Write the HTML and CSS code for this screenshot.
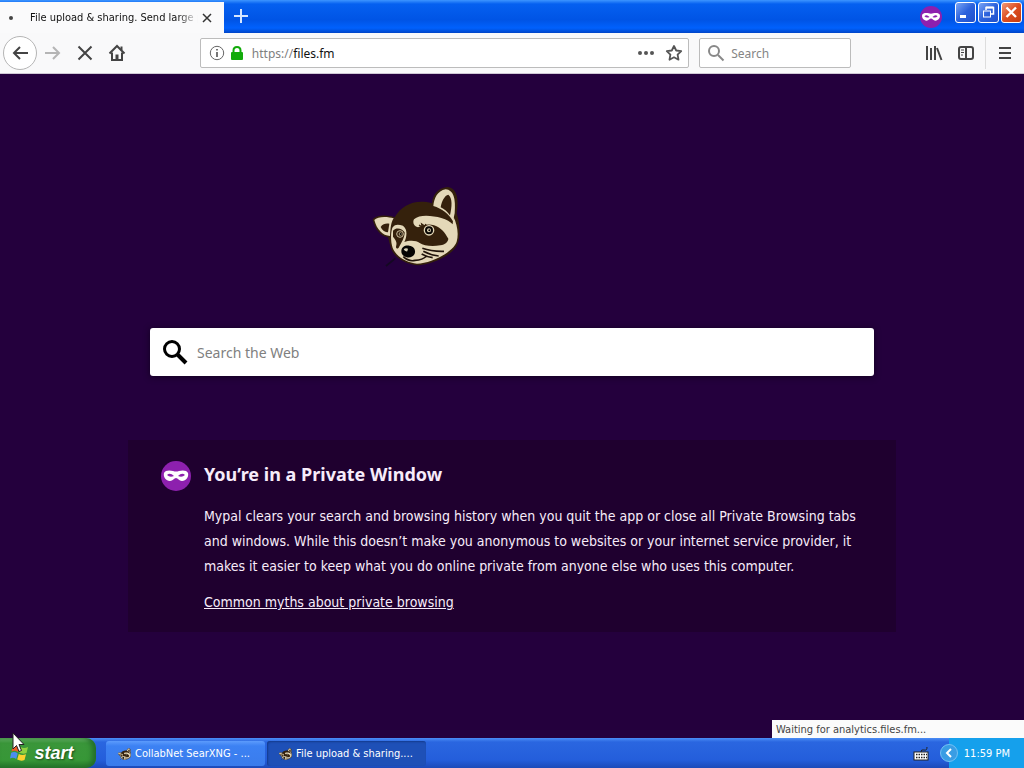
FILE: index.html
```html
<!DOCTYPE html>
<html lang="en">
<head>
  <meta charset="UTF-8" />
  <meta name="viewport" content="width=device-width, initial-scale=1.0"/>
  <title>Private Browsing</title>
  <link rel="stylesheet" href="styles.css">
</head>
<body>

  <!-- shared artwork -->
  <svg class="defs" aria-hidden="true">
    <symbol id="mask" viewBox="0 0 30 30">
      <circle cx="15" cy="15" r="15" fill="#8d20ae"/>
      <path d="M3 12C4 9 9 9 12 10Q15 11 18 10C21 9 26 9 27 12C28 16 25 20 21 20C18 20 17 17 15 17C13 17 12 20 9 20C5 20 2 16 3 12Z" fill="#fff"/>
      <path d="M6 14Q9 11 13 15Q9 17 6 14ZM17 15Q21 11 24 14Q21 17 17 15Z" fill="#8d20ae"/>
    </symbol>
    <symbol id="raccoon" viewBox="0 0 360 300">
      <path d="M38 130C48 115 86 116 104 124C125 88 165 68 216 82C218 58 232 36 262 33C292 36 297 70 290 112C298 135 303 175 294 200C284 234 220 266 172 268C130 262 102 244 92 214L84 184C60 180 44 158 38 130Z" fill="#35210c"/>
      <path d="M43 132C52 120 84 121 101 127C93 140 92 152 90 180C68 179 50 160 43 132Z" fill="#e4d8b8"/>
      <path d="M62 153C68 142 80 142 88 143L84 169C76 169 66 163 62 153Z" fill="#35210c"/>
      <path d="M220 90C222 68 232 44 257 40C280 42 288 66 284 112L279 136C266 112 246 98 220 90Z" fill="#e4d8b8"/>
      <path d="M242 94C245 75 254 58 265 56C278 66 276 92 270 118C262 107 253 100 242 94Z" fill="#35210c"/>
      <path d="M280 122C291 142 297 173 290 197C282 224 219 262 171 263C139 260 109 242 98 216C91 196 92 166 98 154C105 144 115 145 129 149C146 162 138 188 133 198C148 193 169 193 179 201C191 209 214 212 241 208C256 205 264 198 265 188C254 170 244 155 222 148C203 142 187 149 174 154C161 151 157 139 162 130C179 114 217 119 244 126C260 131 271 137 278 145Z" fill="#e4d8b8"/>
      <path d="M99 164C110 153 126 158 134 169C134 184 126 198 116 215C110 221 106 216 109 207C112 199 104 187 99 183Z" fill="#35210c"/>
      <circle cx="120" cy="174" r="10" fill="none" stroke="#c9bd9e" stroke-width="3"/>
      <circle cx="121" cy="174" r="5" fill="#a5997b"/>
      <circle cx="122" cy="174" r="3" fill="#090704"/>
      <path d="M177 147L187 153L185 144L194 150L198 144" fill="none" stroke="#35210c" stroke-width="4"/>
      <circle cx="207" cy="163" r="14" fill="#090704" stroke="#e4d8b8" stroke-width="4"/>
      <circle cx="207" cy="163" r="6" fill="#e4d8b8"/>
      <circle cx="208" cy="163" r="3" fill="#090704"/>
      <path d="M124 226C124 212 136 207 148 209C162 211 168 222 164 233C160 243 148 247 138 243C129 240 124 234 124 226Z" fill="#050403"/>
      <path d="M131 220Q137 214 144 218L142 226Q134 227 131 220Z" fill="#d9d1b7"/>
      <path d="M130 242Q147 258 165 253Q188 252 200 240M187 217Q215 227 252 226M190 226Q212 238 236 240M185 234Q203 244 218 245" fill="none" stroke="#21140b" stroke-width="5"/>
      <path d="M78 270L106 247" fill="none" stroke="#140822" stroke-width="5"/>
    </symbol>
  </svg>

  <header class="titlebar">
    <div class="tab">
      <span class="tab-dot"></span>
      <span class="tab-title">File upload &amp; sharing. Send large p</span>
      <button class="tab-close" aria-label="Close tab">
        <svg width="10" height="10" viewBox="0 0 10 10"><path d="M1 1L9 9M9 1L1 9"/></svg>
      </button>
    </div>
    <button class="new-tab" aria-label="New tab">
      <svg width="14" height="14" viewBox="0 0 14 14"><path d="M7 0V14M0 7H14"/></svg>
    </button>
    <svg class="private-badge" width="22" height="22"><use href="#mask"/></svg>
    <div class="window-buttons">
      <button aria-label="Minimize"><svg width="19" height="19" viewBox="0 0 19 19"><path d="M4 13.500H10" stroke-width="3"/></svg></button>
      <button aria-label="Restore"><svg width="19" height="19" viewBox="0 0 19 19"><path d="M7 7V4.500H14.500V11H12" stroke-width="1.500"/><path d="M7 4.500H14.500" stroke-width="2"/><rect x="4.500" y="8" width="7" height="6"/></svg></button>
      <button class="close" aria-label="Close"><svg width="19" height="19" viewBox="0 0 19 19"><path d="M4.500 4.500L14 14M14 4.500L4.500 14" stroke-width="2.400"/></svg></button>
    </div>
  </header>

  <nav class="toolbar">
    <button class="tool back" aria-label="Back"><svg width="18" height="18" viewBox="0 0 18 18"><path d="M17 9H3M9 3L3 9L9 15"/></svg></button>
    <button class="tool forward" aria-label="Forward" disabled><svg width="18" height="18" viewBox="0 0 18 18"><path d="M1 9H15M9 3L15 9L9 15"/></svg></button>
    <button class="tool" aria-label="Stop"><svg width="18" height="18" viewBox="0 0 18 18"><path d="M2.500 2.500L15.500 15.500M15.500 2.500L2.500 15.500"/></svg></button>
    <button class="tool" aria-label="Home"><svg width="18" height="18" viewBox="0 0 18 18"><path d="M1.500 9.500L9 2L16.500 9.500"/><path d="M4 8.500V16H14V8.500"/><path d="M9 16V10.500" stroke-width="3"/><path d="M13.500 2.500V6"/></svg></button>
    <div class="spacer"></div>
    <div class="urlbar">
      <svg width="16" height="16" viewBox="0 0 16 16" fill="none" stroke="#666"><circle cx="8" cy="8" r="6.700"/><path d="M8 7V12M8 4V5.500" stroke-width="1.800"/></svg>
      <svg width="14" height="16" viewBox="0 0 14 16"><path d="M3.500 8V5.500Q3.500 2 7 2T10.500 5.500V8" fill="none" stroke="#12ab0a" stroke-width="2"/><rect x="1" y="7" width="12" height="8" rx="1" fill="#12ab0a"/></svg>
      <label class="scheme" for="address">https://</label>
      <input id="address" type="text" value="files.fm">
      <button aria-label="Page actions"><svg width="18" height="18" viewBox="0 0 18 18" fill="#555"><circle cx="3" cy="9" r="2"/><circle cx="9" cy="9" r="2"/><circle cx="15" cy="9" r="2"/></svg></button>
      <button aria-label="Bookmark this page"><svg width="18" height="18" viewBox="0 0 18 18"><path d="M9 2L11.200 6.500L16.200 7.200L12.600 10.700L13.500 15.700L9 13.300L4.500 15.700L5.400 10.700L1.800 7.200L6.800 6.500Z" fill="none" stroke="#555" stroke-width="1.800" stroke-linejoin="round"/></svg></button>
    </div>
    <div class="searchbar">
      <svg width="18" height="18" viewBox="0 0 18 18" fill="none" stroke="#888" stroke-width="2"><circle cx="7" cy="7" r="5"/><path d="M11 11L16.500 16.500"/></svg>
      <input type="text" placeholder="Search" aria-label="Search">
    </div>
    <div class="spacer"></div>
    <button class="tool" aria-label="Library"><svg width="18" height="18" viewBox="0 0 18 18"><path d="M2 2V16M6 4V16M10 2V16M12 4L16.500 16"/></svg></button>
    <button class="tool" aria-label="Sidebars"><svg width="18" height="18" viewBox="0 0 18 18"><rect x="2" y="3" width="14" height="12" rx="2"/><path d="M9 3V15"/><path d="M4 6H7M4 8.500H7M4 11H6" stroke-width="1"/></svg></button>
    <span class="divider"></span>
    <button class="tool" aria-label="Menu"><svg width="18" height="18" viewBox="0 0 18 18"><path d="M3 4H15M3 9H15M3 14H15"/></svg></button>
  </nav>

  <main class="page">
    <div class="logo">
      <svg width="120" height="100"><use href="#raccoon"/></svg>
    </div>

    <form class="web-search">
      <svg width="26" height="26" viewBox="0 0 26 26" fill="none" stroke="#000"><circle cx="10" cy="10" r="7.500" stroke-width="3"/><path d="M15.500 15.500L24 24" stroke-width="4"/></svg>
      <input type="text" placeholder="Search the Web" aria-label="Search the Web">
    </form>

    <section class="info">
      <svg class="info-icon" width="30" height="30"><use href="#mask"/></svg>
      <div class="info-text">
        <h1>You’re in a Private Window</h1>
        <p>Mypal clears your search and browsing history when you quit the app or close all Private Browsing tabs and windows. While this doesn’t make you anonymous to websites or your internet service provider, it makes it easier to keep what you do online private from anyone else who uses this computer.</p>
        <a href="#">Common myths about private browsing</a>
      </div>
    </section>

    <div class="status">Waiting for analytics.files.fm...</div>
  </main>

  <footer class="taskbar">
    <button class="start">
      <svg width="20" height="20" viewBox="0 0 20 20"><path d="M3 3Q6 1 9.500 3.500L8 9Q5 7 1.500 8.500Z" fill="#ef5a28"/><path d="M10.500 4Q14 6 18 4L16.500 10Q13 11.500 9 9.500Z" fill="#8fd13f"/><path d="M1.200 9.800Q4.500 8 7.700 10.500L6.200 16Q3 14 0 15.500Z" fill="#4d8df0"/><path d="M8.800 11Q12 13 16 11.300L14.500 17Q11 18.500 7.200 16.500Z" fill="#fbd12f"/></svg>
      start
    </button>
    <div class="tasks">
      <button class="task"><svg width="18" height="16"><use href="#raccoon"/></svg><span>CollabNet SearXNG - ...</span></button>
      <button class="task active"><svg width="18" height="16"><use href="#raccoon"/></svg><span>File upload &amp; sharing....</span></button>
    </div>
    <svg class="keyboard" width="16" height="14" viewBox="0 0 16 14"><path d="M8 5Q8 2 11 3T14 0" fill="none" stroke="#222" /><rect x="1" y="5" width="14" height="8" fill="#fff" stroke="#222"/><path d="M3 7.500H14M3 10.500H14" stroke="#222" stroke-width="1.500" stroke-dasharray="1.500 1"/></svg>
    <div class="tray">
      <button aria-label="Show hidden icons"><svg width="18" height="18" viewBox="0 0 18 18"><circle cx="9" cy="9" r="8.500" fill="#399de4" stroke="#75c1f3"/><path d="M11 5L7 9L11 13" fill="none" stroke="#fff" stroke-width="2"/></svg></button>
      <time>11:59 PM</time>
    </div>
  </footer>

  <svg class="cursor" width="13" height="21" viewBox="0 0 13 21"><path d="M1 1V17L4.500 13.500L7 19.500L9.500 18.500L7 12.500H12Z" fill="#fff" stroke="#222"/></svg>

</body>
</html>
```
FILE: styles.css
```css
* {
  box-sizing: border-box;
}

body {
  margin: 0;
  min-height: 100vh;
  position: relative;
  display: flex;
  flex-direction: column;
  background: #24003d;
  font-family: Tahoma, 'DejaVu Sans Condensed', 'Noto Sans', sans-serif;
  font-size: 11px;
}

button {
  padding: 0;
  border: none;
  background: none;
  font-family: inherit;
  display: flex;
  align-items: center;
  justify-content: center;
}

input {
  flex: 1;
  min-width: 0;
  padding: 0;
  border: none;
  outline: none;
  background: none;
  font-family: 'Noto Sans', sans-serif;
}

.defs {
  position: absolute;
  width: 0;
  height: 0;
}

.titlebar {
  height: 33px;
  padding-top: 2px;
  display: flex;
  background: linear-gradient(#3d95ff 0, #0560f0 4px, #0054e5 20px, #0061fd 28px, #0045c8 100%);
}

.tab {
  width: 224px;
  padding: 0 12px 0 9px;
  display: flex;
  align-items: center;
  background: #fafafb;
}

.tab-dot {
  width: 4px;
  height: 4px;
  border-radius: 50%;
  background: #444;
}

.tab-title {
  flex: 1;
  margin: 0 4px 0 17px;
  overflow: hidden;
  white-space: nowrap;
  color: #111;
  -webkit-mask-image: linear-gradient(to left, transparent, #000 20px);
  mask-image: linear-gradient(to left, transparent, #000 20px);
}

.tab-close svg {
  stroke: #333;
  stroke-width: 1.5;
}

.new-tab {
  width: 34px;
  height: 28px;
}

.new-tab svg {
  stroke: #d5e6ff;
  stroke-width: 2;
}

.private-badge {
  margin: 4px 13px 0 auto;
}

.window-buttons {
  display: flex;
  gap: 2px;
  margin-right: 2px;
}

.window-buttons button {
  width: 21px;
  height: 21px;
  border: 1px solid #fff;
  border-radius: 3px;
  background: linear-gradient(135deg, #7aa5f5, #2c62dc 50%, #1f50cc);
}

.window-buttons .close {
  background: linear-gradient(135deg, #f0997a, #dc4d20 50%, #c53c10);
}

.window-buttons svg {
  fill: none;
  stroke: #fff;
}

.toolbar {
  height: 41px;
  padding: 0 3px;
  display: flex;
  align-items: center;
  background: #f9f9fa;
  border-bottom: 1px solid #cfc8d4;
}

.tool {
  width: 32px;
  height: 32px;
}

.tool svg {
  fill: none;
  stroke: #444;
  stroke-width: 2;
}

.back {
  width: 34px;
  height: 34px;
  border: 1px solid #b5b5b5;
  border-radius: 50%;
  background: #fff;
}

.forward svg {
  stroke: #b5b5b5;
}

.spacer {
  flex: 10;
}

.urlbar,
.searchbar {
  height: 30px;
  display: flex;
  align-items: center;
  background: #fff;
  border: 1px solid #bcbcbc;
  border-radius: 2px;
}

.urlbar {
  flex: 71;
  padding: 0 5px 0 8px;
  font-family: 'Noto Sans', sans-serif;
  font-size: 12px;
}

.urlbar svg + svg {
  margin: 0 8px 0 5px;
}

.urlbar input {
  font-size: 12px;
  color: #111;
}

.urlbar button {
  margin-left: 10px;
}

.scheme {
  color: #808080;
}

.searchbar {
  width: 152px;
  margin-left: 10px;
  padding: 0 7px;
  gap: 6px;
}

.searchbar input {
  font-size: 12px;
}

.searchbar input::placeholder {
  color: #858585;
}

.divider {
  width: 1px;
  height: 32px;
  margin: 0 3px;
  background: #ddd;
}

.page {
  flex: 1;
  position: relative;
  padding: 102px 24px;
  display: flex;
  flex-direction: column;
  align-items: center;
}

.logo {
  width: 304px;
  height: 100px;
}

.web-search {
  width: 100%;
  max-width: 724px;
  height: 48px;
  margin-top: 52px;
  padding: 0 12px;
  display: flex;
  align-items: center;
  gap: 9px;
  background: #fff;
  border-radius: 3px;
  box-shadow: 0 1px 6px #12001f;
}

.web-search input {
  font-size: 14px;
}

.web-search input::placeholder {
  color: #808080;
}

.info {
  width: 100%;
  max-width: 768px;
  margin-top: 64px;
  padding: 20px 33px 17px;
  display: flex;
  gap: 13px;
  background: #1f002f;
  color: #f7ecfa;
  font-size: 14px;
  line-height: 25px;
}

.info-icon {
  flex: none;
  margin-top: 1px;
}

.info-text {
  max-width: 656px;
}

.info h1 {
  margin: 2px 0 17px;
  font-family: 'Noto Sans', sans-serif;
  font-size: 18px;
  line-height: 25px;
}

.info p {
  margin: 0 0 11px;
}

.info a {
  color: inherit;
}

.status {
  position: absolute;
  right: 0;
  bottom: 0;
  width: 252px;
  height: 18px;
  padding-left: 4px;
  line-height: 19px;
  background: #fbfbfb;
  color: #444;
}

.taskbar {
  height: 30px;
  display: flex;
  background: linear-gradient(#4b8df5 0, #2a66e0 4px, #245edb 22px, #1c4ab8 100%);
}

.start {
  width: 96px;
  gap: 4px;
  padding-right: 12px;
  border-radius: 0 10px 10px 0;
  background: linear-gradient(#6cb56c 0, #3a963a 5px, #379737 22px, #23742a 100%);
  box-shadow: inset -4px 0 5px #246f2a;
  color: #fff;
  font-family: 'Liberation Sans', sans-serif;
  font-size: 18px;
  font-weight: bold;
  font-style: italic;
  text-shadow: 1px 1px 2px #1b4a1b;
}

.tasks {
  flex: 1;
  display: flex;
  gap: 2px;
  padding: 3px 10px 2px;
}

.task {
  width: 159px;
  padding: 0 10px;
  justify-content: flex-start;
  gap: 1px;
  border-radius: 3px;
  background: linear-gradient(#5c9bfc, #3c81f3 5px, #3a7cec);
  color: #fff;
  font-size: 11px;
}

.task span {
  white-space: nowrap;
}

.task.active {
  background: #1e50b7;
  box-shadow: inset 1px 1px 2px #143a8c;
}

.keyboard {
  margin: 9px 11px 0 0;
}

.tray {
  display: flex;
  align-items: center;
  gap: 6px;
  padding-right: 14px;
  background: linear-gradient(to right, transparent 9px, #15a0ec 9px);
  color: #fff;
}

.cursor {
  position: absolute;
  left: 12px;
  bottom: 15px;
}
```
